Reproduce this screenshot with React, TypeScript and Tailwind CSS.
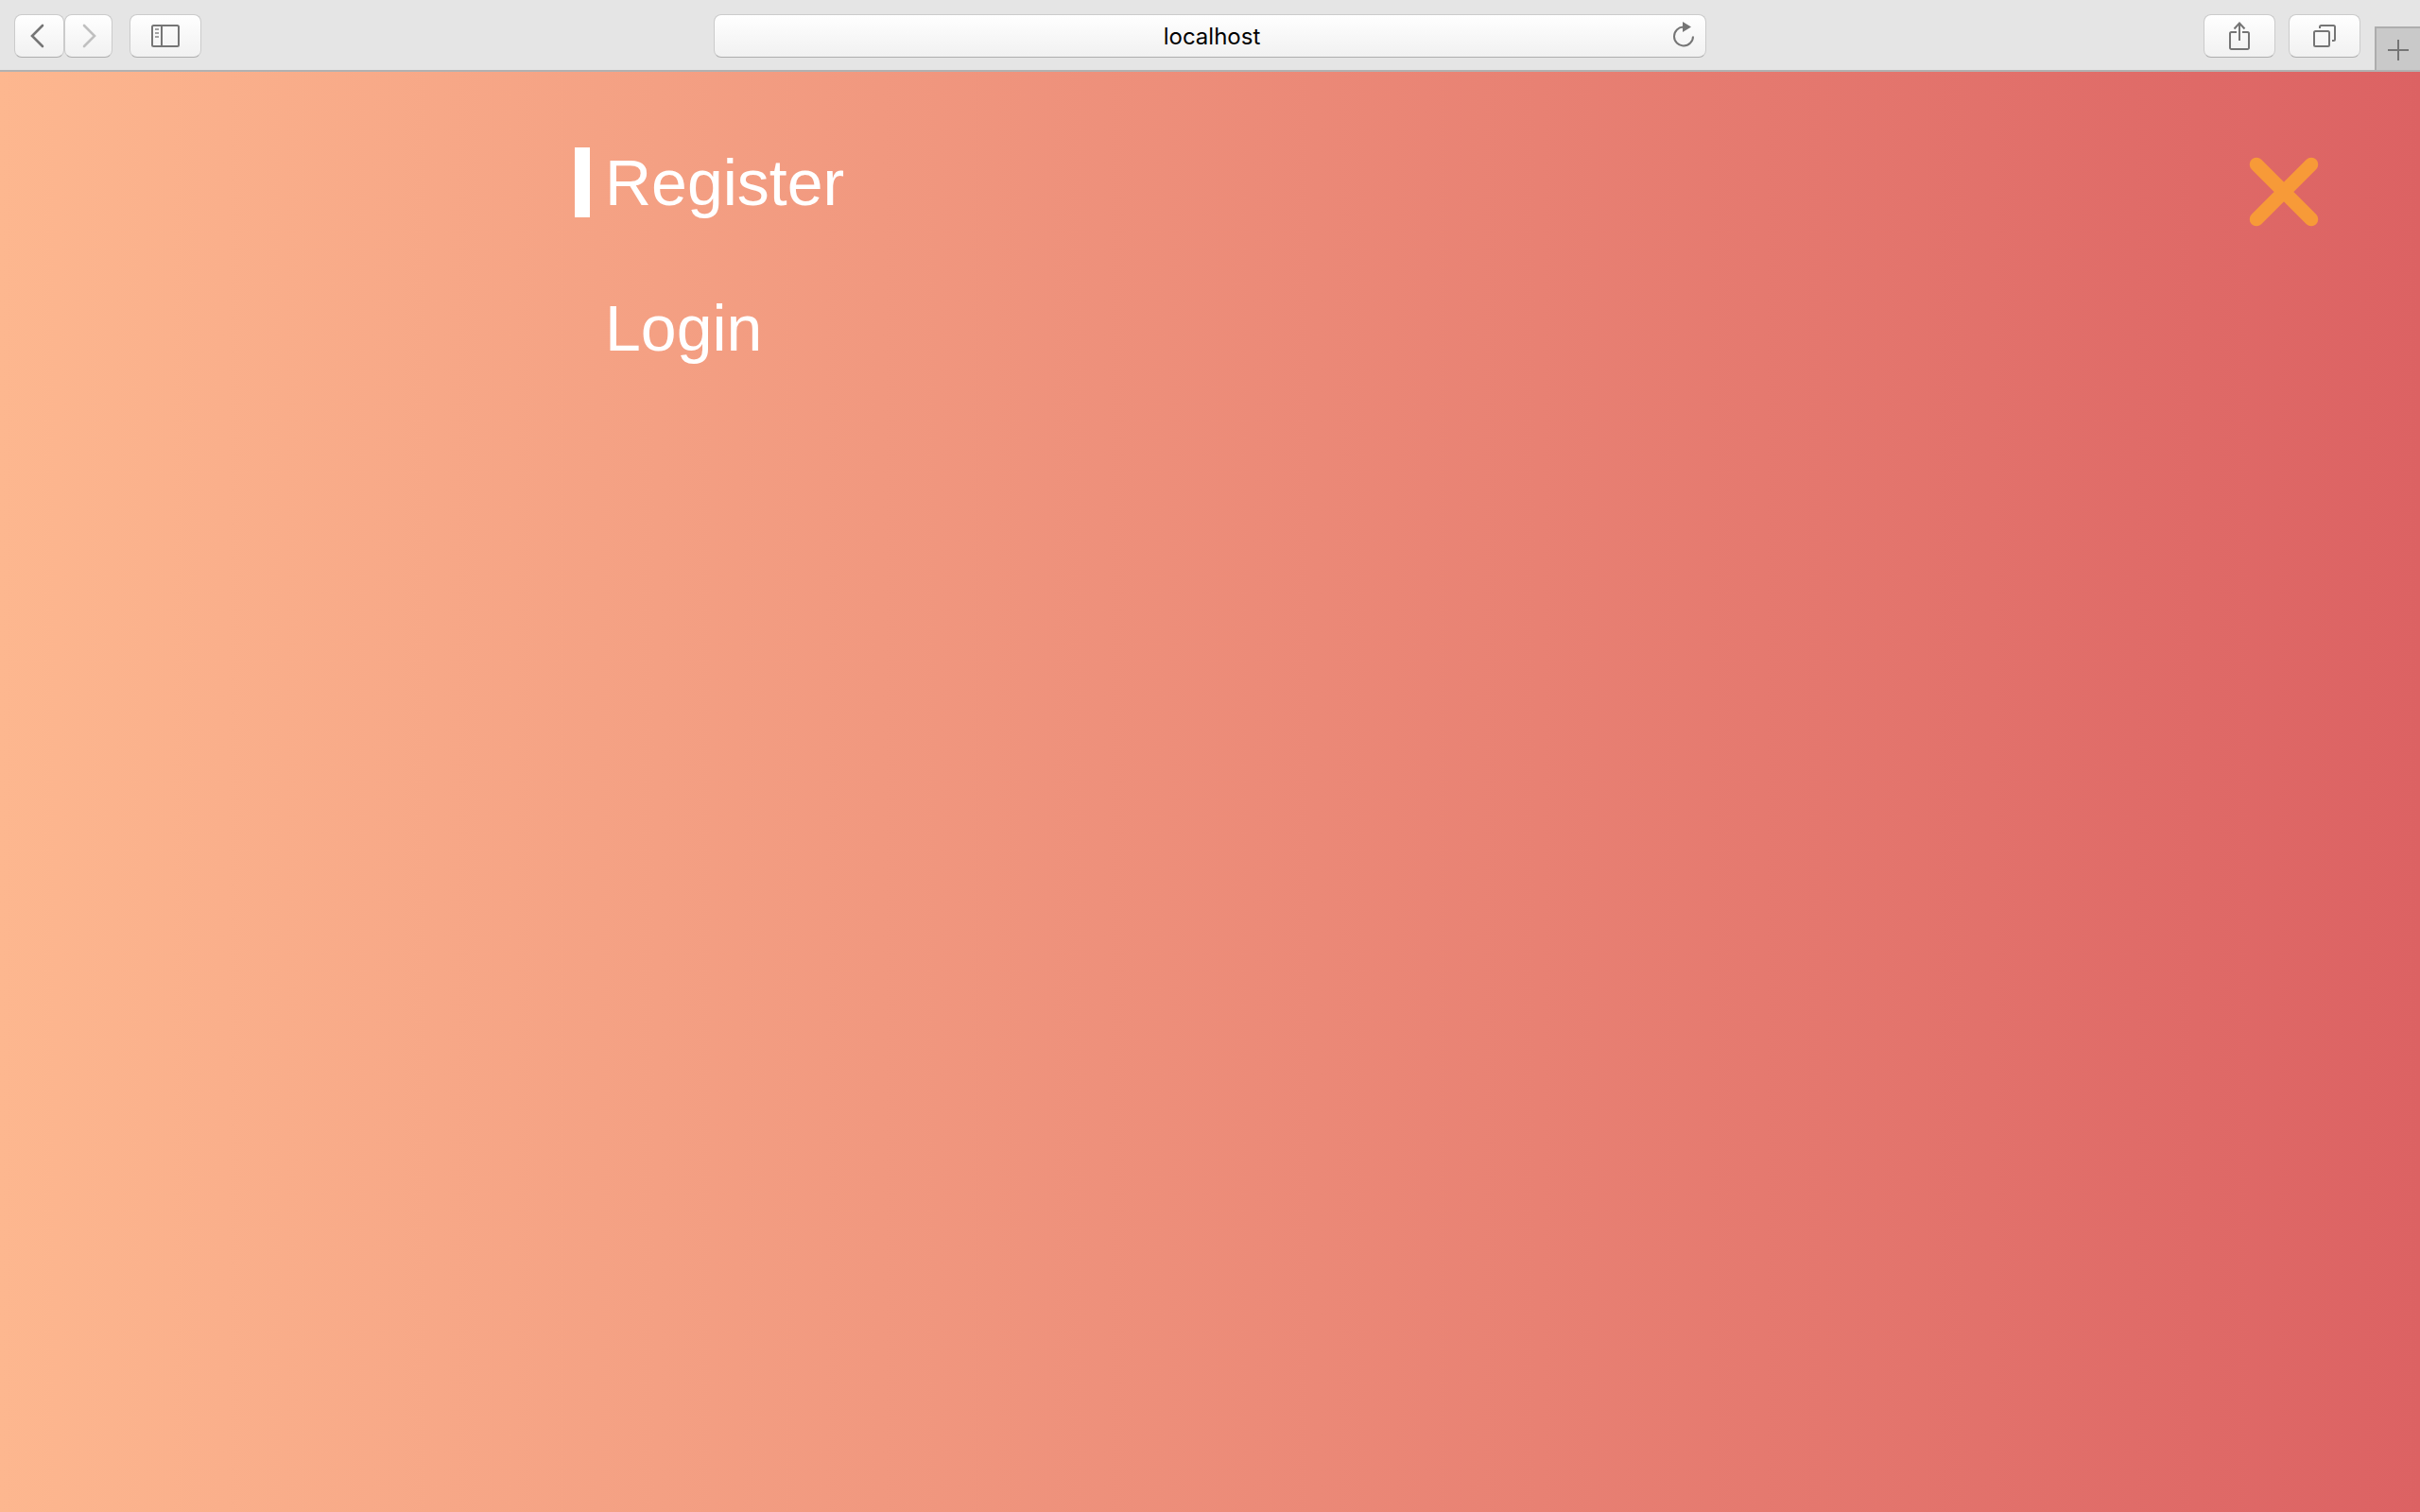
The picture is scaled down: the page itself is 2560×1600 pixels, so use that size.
import type { ReactNode } from "react";

function ToolbarButton({
  label,
  className,
  disabled,
  children,
}: {
  label: string;
  className: string;
  disabled?: boolean;
  children: ReactNode;
}) {
  return (
    <button
      type="button"
      aria-label={label}
      disabled={disabled}
      className={`flex h-[46px] shrink-0 items-center justify-center rounded-lg border border-[#cbcbcb] border-b-[#adadad] bg-linear-to-b from-white to-[#f1f1f1] ${className}`}
    >
      {children}
    </button>
  );
}

function BrowserBar() {
  return (
    <header className="flex h-[76px] items-center border-b-2 border-[#b1b1b1] bg-[#e5e5e5] pt-0.5 text-[#757575]">
      <div className="flex flex-1 items-center">
        <ToolbarButton label="Back" className="ml-[15px] w-[53px]">
          <svg width="20" height="26" viewBox="0 0 20 26" fill="none" stroke="currentColor" strokeWidth="2.6" strokeLinecap="round">
            <path d="M13 2 2 13l11 11" />
          </svg>
        </ToolbarButton>
        <ToolbarButton label="Forward" className="w-[51px] text-[#c0c0c0]" disabled>
          <svg width="16" height="26" viewBox="0 0 16 26" fill="none" stroke="currentColor" strokeWidth="2.6" strokeLinecap="round">
            <path d="M3 2l11 11L3 24" />
          </svg>
        </ToolbarButton>
        <ToolbarButton label="Show sidebar" className="ml-[18px] w-[76px]">
          <svg width="30" height="24" viewBox="0 0 30 24" fill="none" stroke="currentColor" strokeWidth="2">
            <rect x="1" y="1" width="28" height="22" rx="1.5" />
            <path d="M11 1v22" />
            <path d="M4 5h4M4 9h4M4 13h4" stroke="#a3a3a3" />
          </svg>
        </ToolbarButton>
      </div>

      <div className="relative w-[41%]">
        <input
          type="text"
          aria-label="Address"
          defaultValue="localhost"
          className="block h-[46px] w-full rounded-lg border border-[#cbcbcb] border-b-[#adadad] bg-linear-to-b from-white to-[#f1f1f1] pt-px pr-11 pl-12 text-center font-['Inter',sans-serif] text-2xl text-black outline-none"
        />
        <button type="button" aria-label="Reload" className="absolute inset-y-0 right-3 flex items-center">
          <svg width="24" height="30" viewBox="0 0 24 30" fill="none">
            <path d="M22 15.500a10 10 0 1 1-10-10" stroke="currentColor" strokeWidth="2" />
            <path d="M11 0l9 5.500-9 5.500z" fill="currentColor" />
          </svg>
        </button>
      </div>

      <div className="flex flex-1 items-center justify-end self-stretch">
        <ToolbarButton label="Share" className="w-[76px]">
          <svg width="24" height="34" viewBox="0 0 24 34" fill="none" stroke="currentColor" strokeWidth="2">
            <path d="M9 13H3.500A1.500 1.500 0 0 0 2 14.500v15A1.500 1.500 0 0 0 3.500 31h17a1.500 1.500 0 0 0 1.500-1.500v-15a1.500 1.500 0 0 0-1.500-1.500H15" />
            <path d="M12 22V4M6.500 9.500 12 3.500l5.500 6" />
          </svg>
        </ToolbarButton>
        <ToolbarButton label="Show all tabs" className="ml-3.5 w-[76px]">
          <svg width="24" height="24" viewBox="0 0 24 24" fill="none" stroke="currentColor" strokeWidth="2">
            <rect x="1" y="7" width="16" height="16" rx="1.500" />
            <path d="M7 4V2.500A1.500 1.500 0 0 1 8.500 1h13A1.500 1.500 0 0 1 23 2.500v13a1.500 1.500 0 0 1-1.500 1.500H20" />
          </svg>
        </ToolbarButton>
        <button
          type="button"
          aria-label="New tab"
          className="ml-[15px] flex h-[46px] w-12 items-center justify-center self-end border-t-2 border-l-2 border-[#adadad] bg-[#c9c9c9] pt-0.5"
        >
          <svg width="22" height="22" viewBox="0 0 22 22" stroke="currentColor" strokeWidth="2">
            <path d="M11 0v22M0 11h22" />
          </svg>
        </button>
      </div>
    </header>
  );
}

function MenuLink({ href, active, children }: { href: string; active?: boolean; children: ReactNode }) {
  return (
    <a
      href={href}
      aria-current={active ? "page" : undefined}
      className={`border-l-16 pl-4 text-[68px] leading-[74px] text-white ${active ? "border-white" : "border-transparent"}`}
    >
      {children}
    </a>
  );
}

export default function App() {
  return (
    <div className="flex min-h-screen flex-col font-['Liberation_Sans',Arial,sans-serif]">
      <BrowserBar />
      <main className="flex flex-1 items-start justify-between bg-[linear-gradient(to_right,#fdb78f,#dc6263)] pt-20">
        <nav className="ml-[23.75%] flex flex-col items-start gap-20">
          <MenuLink href="#register" active>
            Register
          </MenuLink>
          <MenuLink href="#login">Login</MenuLink>
        </nav>
        <button type="button" aria-label="Close menu" className="mt-2.5 mr-[107px]">
          <svg width="74" height="74" viewBox="0 0 74 74" stroke="#f79a38" strokeWidth="14.500" strokeLinecap="round">
            <path d="M8 8l58 58M66 8 8 66" />
          </svg>
        </button>
      </main>
    </div>
  );
}
